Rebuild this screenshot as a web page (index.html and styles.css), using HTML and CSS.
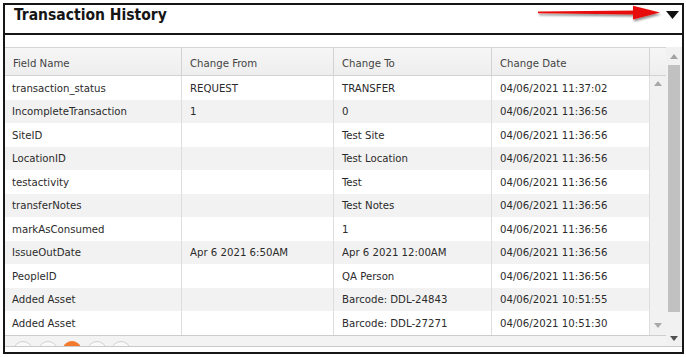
FILE: index.html
```html
<!DOCTYPE html>
<html>
<head>
<meta charset="utf-8">
<link rel="stylesheet" href="styles.css">
</head>
<body>
<div class="panel">
  <div class="titlebar">
    <h1 class="title">Transaction History</h1>
    <svg class="annot" width="135" height="25" viewBox="0 0 135 25">
      <defs>
        <filter id="sh" x="-10%" y="-50%" width="120%" height="200%">
          <feDropShadow dx="1" dy="2" stdDeviation="1" flood-color="#000" flood-opacity="0.45"/>
        </filter>
      </defs>
      <g filter="url(#sh)" fill="#e8100c">
        <polygon points="8,6.6 106,5.4 106,9.6 8,8.2"/>
        <polygon points="103,0.8 130,7.4 103,14.4"/>
      </g>
    </svg>
    <svg class="caret" width="13" height="8" viewBox="0 0 13 8">
      <polygon points="0,0 13,0 6.5,8" fill="#111"/>
    </svg>
  </div>
  <div class="content">
    <div class="viewport">
      <div class="grid">
        <div class="ghead">
          <div class="hc">Field Name</div>
          <div class="hc">Change From</div>
          <div class="hc">Change To</div>
          <div class="hc">Change Date</div>
          <div class="hc filler"></div>
        </div>
        <div class="gbody">
          <div class="rows">
            <div class="row"><div class="c">transaction_status</div><div class="c">REQUEST</div><div class="c">TRANSFER</div><div class="c">04/06/2021 11:37:02</div></div>
            <div class="row alt"><div class="c">IncompleteTransaction</div><div class="c">1</div><div class="c">0</div><div class="c">04/06/2021 11:36:56</div></div>
            <div class="row"><div class="c">SiteID</div><div class="c"></div><div class="c">Test Site</div><div class="c">04/06/2021 11:36:56</div></div>
            <div class="row alt"><div class="c">LocationID</div><div class="c"></div><div class="c">Test Location</div><div class="c">04/06/2021 11:36:56</div></div>
            <div class="row"><div class="c">testactivity</div><div class="c"></div><div class="c">Test</div><div class="c">04/06/2021 11:36:56</div></div>
            <div class="row alt"><div class="c">transferNotes</div><div class="c"></div><div class="c">Test Notes</div><div class="c">04/06/2021 11:36:56</div></div>
            <div class="row"><div class="c">markAsConsumed</div><div class="c"></div><div class="c">1</div><div class="c">04/06/2021 11:36:56</div></div>
            <div class="row alt"><div class="c">IssueOutDate</div><div class="c">Apr 6 2021 6:50AM</div><div class="c">Apr 6 2021 12:00AM</div><div class="c">04/06/2021 11:36:56</div></div>
            <div class="row"><div class="c">PeopleID</div><div class="c"></div><div class="c">QA Person</div><div class="c">04/06/2021 11:36:56</div></div>
            <div class="row alt"><div class="c">Added Asset</div><div class="c"></div><div class="c">Barcode: DDL-24843</div><div class="c">04/06/2021 10:51:55</div></div>
            <div class="row"><div class="c">Added Asset</div><div class="c"></div><div class="c">Barcode: DDL-27271</div><div class="c">04/06/2021 10:51:30</div></div>
          </div>
          <div class="iscroll">
            <svg width="8" height="5" viewBox="0 0 8 5"><polygon points="0,5 8,5 4,0" fill="#a8a8a8"/></svg>
            <svg width="8" height="5" viewBox="0 0 8 5"><polygon points="0,0 8,0 4,5" fill="#a8a8a8"/></svg>
          </div>
        </div>
        <div class="pager">
          <span class="pbtn"><svg width="10" height="8" viewBox="0 0 10 8"><rect x="1" y="1" width="1.3" height="6" fill="#999"/><polygon points="8,1 8,7 3,4" fill="#999"/></svg></span>
          <span class="pbtn"><svg width="10" height="8" viewBox="0 0 10 8"><polygon points="7,1 7,7 2,4" fill="#999"/></svg></span>
          <span class="pbtn cur"></span>
          <span class="pbtn"><svg width="10" height="8" viewBox="0 0 10 8"><polygon points="3,1 3,7 8,4" fill="#999"/></svg></span>
          <span class="pbtn"><svg width="10" height="8" viewBox="0 0 10 8"><polygon points="2,1 2,7 7,4" fill="#999"/><rect x="7.7" y="1" width="1.3" height="6" fill="#999"/></svg></span>
        </div>
      </div>
      <div class="oscroll">
        <div class="obtn"><svg width="8" height="5" viewBox="0 0 8 5"><polygon points="0,5 8,5 4,0" fill="#a3a3a3"/></svg></div>
        <div class="otrack"><div class="thumb"></div></div>
        <div class="obtn"><svg width="8" height="5" viewBox="0 0 8 5"><polygon points="0,0 8,0 4,5" fill="#505050"/></svg></div>
      </div>
    </div>
  </div>
</div>
</body>
</html>
```

FILE: styles.css
```css
html, body {
  margin: 0;
  padding: 0;
  background: #ffffff;
}
body {
  padding: 3px 0 0 3px;
  font-family: "DejaVu Sans Condensed", "DejaVu Sans", sans-serif;
}
.panel {
  width: 677px;
  border: 2px solid #161616;
  background: #fff;
}
.titlebar {
  position: relative;
  height: 28px;
  border-bottom: 2px solid #161616;
  display: flex;
  justify-content: space-between;
  align-items: flex-start;
}
.title {
  margin: 0;
  padding: 1px 0 0 9px;
  font-size: 15.5px;
  line-height: 18px;
  font-weight: bold;
  color: #151515;
}
.annot {
  position: absolute;
  left: 525px;
  top: 0;
}
.caret {
  margin: 5.5px 3px 0 0;
}
.content {
  padding: 12px 0 5px 0;
}
.viewport {
  height: 299px;
  overflow: hidden;
  display: flex;
  border-bottom: 1px solid #c9c9c9;
  background: #f2f2f2;
}
.grid {
  width: 661px;
  border-top: 1px solid #d4d4d4;
  background: #fff;
  font-size: 11.3px;
  color: #2b2b2b;
}
.ghead {
  display: grid;
  grid-template-columns: 177px 152px 158px 158px 16px;
  height: 27px;
  border-bottom: 1px solid #d2d2d2;
  background: linear-gradient(#f6f6f6, #eeeeee);
}
.hc {
  border-right: 1px solid #d3d3d3;
  padding: 9px 0 0 8px;
  color: #444;
}
.hc.filler {
  border-right: none;
}
.gbody {
  display: flex;
}
.rows {
  width: 645px;
}
.row {
  display: grid;
  grid-template-columns: 177px 152px 158px 158px;
  height: 23.5px;
  background: #fff;
}
.row.alt {
  background: #f2f2f2;
}
.c {
  border-right: 1px solid #dedede;
  padding: 1px 0 0 8px;
  display: flex;
  align-items: center;
  white-space: nowrap;
}
.c:first-child {
  padding-left: 7px;
}
.iscroll {
  width: 16px;
  background: #f1f1f1;
  display: flex;
  flex-direction: column;
  justify-content: space-between;
  align-items: center;
  padding: 5px 0 7px 0;
  box-sizing: border-box;
}
.pager {
  border-top: 1px solid #cdcdcd;
  background: #f3f3f3;
  height: 30px;
  display: flex;
  gap: 4.5px;
  padding: 5px 0 0 8px;
}
.pbtn {
  width: 20px;
  height: 20px;
  box-sizing: border-box;
  border-radius: 50%;
  border: 1px solid #d2d2d2;
  background: #f9f9f9;
  display: flex;
  align-items: center;
  justify-content: center;
}
.pbtn.cur {
  background: #f47a2c;
  border-color: #f47a2c;
}
.oscroll {
  width: 16px;
  display: flex;
  flex-direction: column;
  background: #f1f1f1;
  padding-top: 1px;
}
.obtn {
  height: 16px;
  display: flex;
  align-items: center;
  justify-content: center;
}
.otrack {
  height: 265px;
  padding-top: 1px;
}
.thumb {
  margin-left: 2px;
  width: 12px;
  height: 247px;
  background: #c1c1c1;
}
```
